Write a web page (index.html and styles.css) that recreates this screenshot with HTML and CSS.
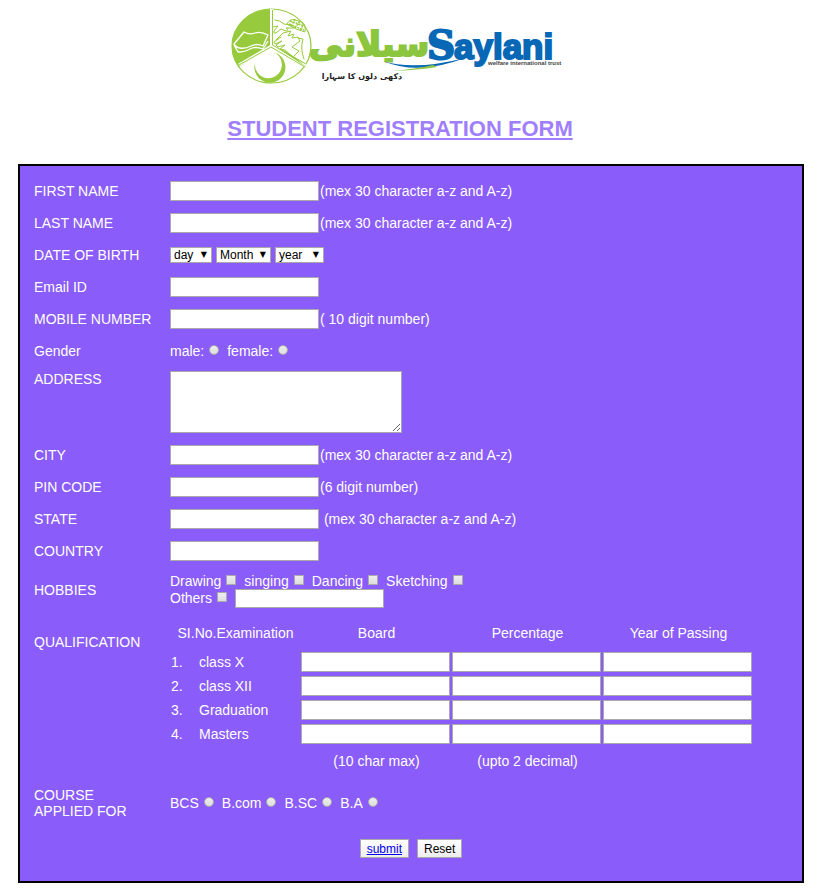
FILE: index.html
```html
<!DOCTYPE html>
<html lang="en">
<head>
<meta charset="utf-8">
<title>Student Registration Form</title>
<link rel="stylesheet" href="styles.css">
</head>
<body>
<header class="masthead">
  <svg class="logo" width="340" height="80" viewBox="0 0 340 80" role="img" aria-label="Saylani Welfare International Trust">
    <ellipse cx="41.5" cy="40" rx="39.5" ry="37" fill="#fff"/>
    <path d="M41.5 40V3A39.5 37 0 0 0 9 61Z" fill="#97ca3d"/>
    <ellipse cx="41.5" cy="40" rx="39.5" ry="37" fill="none" stroke="#97ca3d" stroke-width="1.2"/>
    <path d="M41.5 3V40L9 59M41.5 40L76 59" fill="none" stroke="#fff" stroke-width="3"/>
    <path d="M42.5 4V39L76 58M41 41L9 59M41 41L75 61" fill="none" stroke="#97ca3d"/>
    <path d="M4 38L14 26Q19 29 25 27T38 29L33 40Q27 37 21 40T10 42Q7 42 4 38ZM4 39L8 46Q15 46 20 43T33 43L38 35" fill="none" stroke="#fff" stroke-width="1.3" stroke-linejoin="round"/>
    <path d="M43 46A15.5 15.5 0 1 1 25 57A13.5 13.5 0 1 0 43 46Z" fill="#97ca3d"/>
    <g fill="none" stroke="#97ca3d" stroke-width="1" stroke-linecap="round" stroke-linejoin="round">
      <path d="M45 14Q50 14 54 18L61 19Q65 20 64 22L56 22Q60 25 56 25L51 23L46 27Q43 28 44 25L48 20L43 21"/>
      <path d="M46 34L53 27L61 25L58 30L64 28L62 32L68 31L70 35L62 41L69 45L63 51L55 44L50 43L55 39L48 41L46 39L52 35L45 38L44 36L51 31"/>
      <path d="M68 32L73 33Q70 43 74 53"/>
    </g>
    <path d="M57 18Q60 12 65 14L72 16Q76 19 75 26L66 23Z" fill="none" stroke="#97ca3d" stroke-width="1"/>
    <path d="M59 18L74 24M60 15L74 20M61 20L65 13M65 22L70 15M70 24L74 18" stroke="#97ca3d" stroke-width="1.5" stroke-dasharray="2 1"/>
    <path d="M47 42L75 60L66 52L55 45Z" fill="#97ca3d"/>
    <text x="139" y="50" class="logo-urdu" text-anchor="middle" direction="rtl">سیلانی</text>
    <text x="132" y="73" class="logo-tagline" text-anchor="middle" direction="rtl">دکھی دلوں کا سہارا</text>
    <path d="M153 55Q184 65 235 52Q188 70 153 55Z" fill="#0968b5"/>
    <path d="M162 65Q185 63 203 59L207 61Q188 64 162 65Z" fill="#8cc63f"/>
    <text x="197" y="53" class="logo-word logo-initial">S</text>
    <text x="224" y="53" class="logo-word">aylani</text>
    <text x="258" y="59" class="logo-small">welfare international trust</text>
  </svg>
  <h1>STUDENT REGISTRATION FORM</h1>
</header>

<form class="panel" action="#" onsubmit="return false">
  <div class="row">
    <label for="first">FIRST NAME</label>
    <div class="field"><input class="text" id="first" type="text" maxlength="30"><span class="hint">(mex 30 character a-z and A-z)</span></div>
  </div>
  <div class="row">
    <label for="last">LAST NAME</label>
    <div class="field"><input class="text" id="last" type="text" maxlength="30"><span class="hint">(mex 30 character a-z and A-z)</span></div>
  </div>
  <div class="row">
    <label for="day">DATE OF BIRTH</label>
    <div class="field dates">
      <span class="pick day"><select id="day"><option>day</option></select></span>
      <span class="pick month"><select aria-label="Month"><option>Month</option></select></span>
      <span class="pick year"><select aria-label="Year"><option>year</option></select></span>
    </div>
  </div>
  <div class="row">
    <label for="email">Email ID</label>
    <div class="field"><input class="text" id="email" type="text"></div>
  </div>
  <div class="row">
    <label for="mobile">MOBILE NUMBER</label>
    <div class="field"><input class="text" id="mobile" type="text"><span class="hint">( 10 digit number)</span></div>
  </div>
  <div class="row">
    <span>Gender</span>
    <div class="field choices">
      <label class="choice">male: <input type="radio" name="gender"></label>
      <label class="choice">female: <input type="radio" name="gender"></label>
    </div>
  </div>
  <div class="row address">
    <label for="address">ADDRESS</label>
    <div class="field"><textarea id="address"></textarea></div>
  </div>
  <div class="row">
    <label for="city">CITY</label>
    <div class="field"><input class="text" id="city" type="text"><span class="hint">(mex 30 character a-z and A-z)</span></div>
  </div>
  <div class="row">
    <label for="pin">PIN CODE</label>
    <div class="field"><input class="text" id="pin" type="text"><span class="hint">(6 digit number)</span></div>
  </div>
  <div class="row">
    <label for="state">STATE</label>
    <div class="field"><input class="text" id="state" type="text"><span class="hint">&nbsp;(mex 30 character a-z and A-z)</span></div>
  </div>
  <div class="row">
    <label for="country">COUNTRY</label>
    <div class="field"><input class="text" id="country" type="text"></div>
  </div>
  <div class="row hobbies">
    <span>HOBBIES</span>
    <div>
      <div class="choices">
        <label class="choice">Drawing <input type="checkbox"></label>
        <label class="choice">singing <input type="checkbox"></label>
        <label class="choice">Dancing <input type="checkbox"></label>
        <label class="choice">Sketching <input type="checkbox"></label>
      </div>
      <div class="choices">
        <label class="choice">Others <input type="checkbox"></label>
        <input class="text" type="text" aria-label="Other hobbies">
      </div>
    </div>
  </div>
  <div class="row qualification">
    <span>QUALIFICATION</span>
    <table>
      <colgroup><col class="num"><col class="exam"><col class="mark"><col class="mark"><col class="mark"></colgroup>
      <thead>
        <tr><th colspan="2">SI.No.Examination</th><th>Board</th><th>Percentage</th><th>Year of Passing</th></tr>
      </thead>
      <tbody>
        <tr><td>1.</td><td>class X</td><td><input class="text" type="text" aria-label="Class X board"></td><td><input class="text" type="text" aria-label="Class X percentage"></td><td><input class="text" type="text" aria-label="Class X year"></td></tr>
        <tr><td>2.</td><td>class XII</td><td><input class="text" type="text" aria-label="Class XII board"></td><td><input class="text" type="text" aria-label="Class XII percentage"></td><td><input class="text" type="text" aria-label="Class XII year"></td></tr>
        <tr><td>3.</td><td>Graduation</td><td><input class="text" type="text" aria-label="Graduation board"></td><td><input class="text" type="text" aria-label="Graduation percentage"></td><td><input class="text" type="text" aria-label="Graduation year"></td></tr>
        <tr><td>4.</td><td>Masters</td><td><input class="text" type="text" aria-label="Masters board"></td><td><input class="text" type="text" aria-label="Masters percentage"></td><td><input class="text" type="text" aria-label="Masters year"></td></tr>
      </tbody>
      <tfoot>
        <tr><td colspan="2"></td><td>(10 char max)</td><td>(upto 2 decimal)</td><td></td></tr>
      </tfoot>
    </table>
  </div>
  <div class="row course">
    <span>COURSE<br>APPLIED FOR</span>
    <div class="field choices">
      <label class="choice">BCS <input type="radio" name="course"></label>
      <label class="choice">B.com <input type="radio" name="course"></label>
      <label class="choice">B.SC <input type="radio" name="course"></label>
      <label class="choice">B.A <input type="radio" name="course"></label>
    </div>
  </div>
  <div class="actions">
    <button class="submit" type="submit">submit</button>
    <button type="reset">Reset</button>
  </div>
</form>
</body>
</html>
```
FILE: styles.css
```css
* { box-sizing: border-box; }

body {
  margin: 0;
  background: #fff;
  color: #fff;
  font: 14px/16px "Liberation Sans", Arial, sans-serif;
}

.masthead {
  display: flex;
  flex-direction: column;
  align-items: center;
  padding: 6px 20px 0 0;
}

.logo { display: block; }
.logo-urdu { font: bold 34px "DejaVu Sans", sans-serif; fill: #8cc63f; stroke: #8cc63f; stroke-width: 2px; }
.logo-tagline { font: bold 8px "DejaVu Sans", sans-serif; fill: #222; }
.logo-word { font: bold 35px "Liberation Sans", sans-serif; fill: #0968b5; stroke: #0968b5; stroke-width: 2px; }
.logo-initial { font: bold 39px "DejaVu Serif", serif; }
.logo-small { font: bold 6px "Liberation Sans", sans-serif; fill: #444; }

h1 {
  margin: 31px 0 23px;
  color: #a07fff;
  font-size: 22px;
  line-height: 24px;
  text-decoration: underline;
}

.panel {
  margin: 0 16px 8px 18px;
  padding: 9px 14px 14px;
  border: 2px solid #000;
  background: #8a5cfa;
}

.row {
  display: grid;
  grid-template-columns: 136px 1fr;
  align-items: center;
  min-height: 32px;
}

.field { display: flex; align-items: center; }
.hint { margin-left: 1px; }

.text, textarea, select, button {
  border: 1px solid #a9a9a9;
  border-radius: 0;
  background: #fff;
  color: #000;
  font: 12px "Liberation Sans", Arial, sans-serif;
}

.text { width: 149px; height: 20px; padding: 1px 2px; }

.dates { gap: 4px; }
.pick { position: relative; display: flex; }
.pick::after {
  content: "▼";
  position: absolute;
  right: 5px;
  top: 0;
  color: #000;
  font: 8px/16px "DejaVu Sans", sans-serif;
  pointer-events: none;
}
select { width: 100%; height: 16px; padding: 0 3px; appearance: none; line-height: 14px; }
.day { width: 42px; }
.month { width: 55px; }
.year { width: 49px; }

.choices { display: flex; align-items: center; gap: 8px; }
.choice { display: flex; align-items: center; gap: 5px; }
.choice input {
  appearance: none;
  width: 10px;
  height: 10px;
  margin: 0 0 2px;
  border: 1px solid #aaa;
  background: linear-gradient(#eee, #ddd);
}
.choice input[type="radio"] { border-radius: 50%; }

.address { align-items: start; padding: 4px 0 6px; }
textarea { display: block; width: 232px; height: 62px; resize: both; }

.hobbies { min-height: 46px; }
.hobbies .text { height: 19px; }

.qualification { align-items: start; padding-top: 3px; }
.qualification > span { padding-top: 18px; }
table { width: 584px; border-collapse: collapse; table-layout: fixed; }
.num { width: 28px; }
.exam { width: 103px; }
.mark { width: 151px; }
th, td { padding: 0; font-weight: normal; text-align: left; }
th, tfoot td { text-align: center; }
thead tr { height: 34px; }
tbody tr { height: 24px; }
tbody td:first-child { padding-left: 1px; }
tbody td:nth-child(2) { padding-left: 1px; }
tbody .text { display: block; }
tfoot tr { height: 30px; }

.course { min-height: 54px; }

.actions { display: flex; justify-content: center; align-items: center; gap: 8px; height: 37px; }
button { height: 19px; padding: 0 6px; background: linear-gradient(#fff, #eee); line-height: 16px; }
.submit { color: #00e; text-decoration: underline; }
```
